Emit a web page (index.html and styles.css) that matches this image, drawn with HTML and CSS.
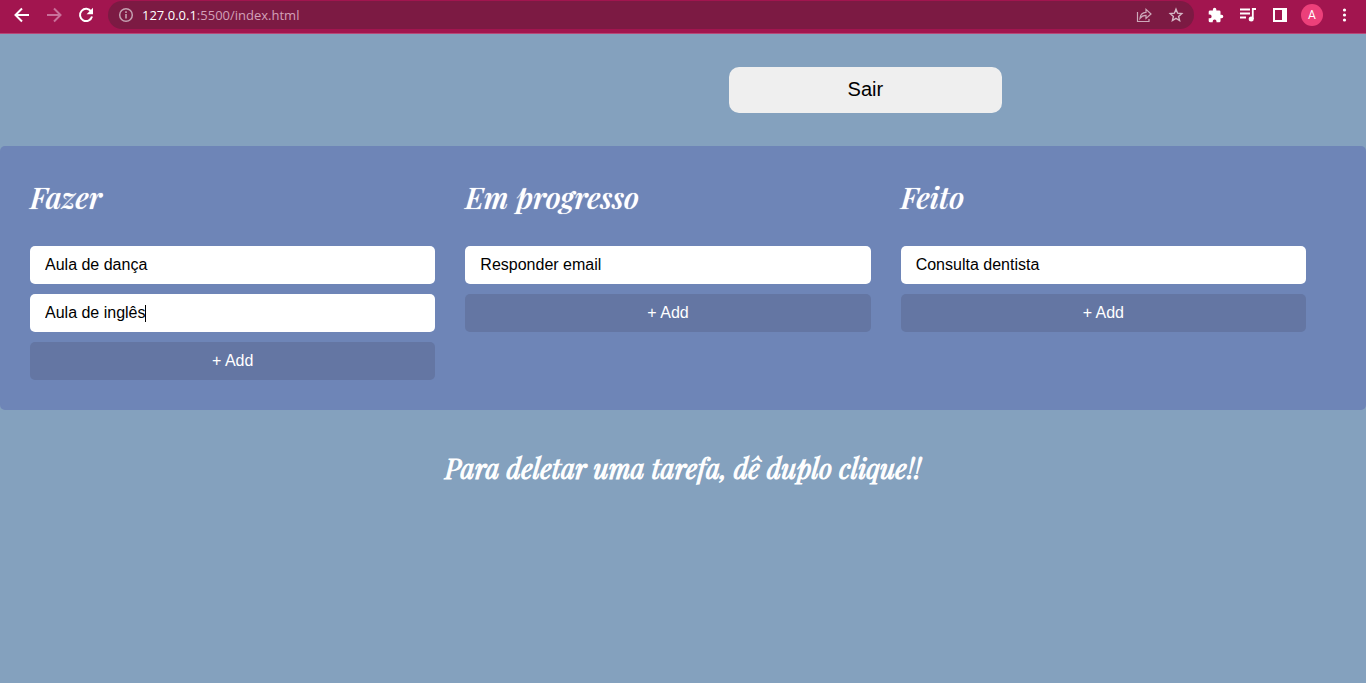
FILE: index.html
```html
<!DOCTYPE html>
<html lang="pt-BR">
<head>
<meta charset="utf-8">
<meta name="viewport" content="width=device-width, initial-scale=1">
<title>Tarefas</title>
<link rel="stylesheet" href="styles.css">
</head>
<body>
<header class="toolbar">
  <nav class="nav" aria-label="Navegação">
    <button class="icon-btn" type="button" aria-label="Voltar"><svg viewBox="0 0 16 16"><path d="M15 8H2M8 1.500 1.500 8 8 14.500" fill="none" stroke="#fff" stroke-width="2"/></svg></button>
    <button class="icon-btn" type="button" aria-label="Avançar"><svg viewBox="0 0 16 16"><path d="M1 8h13M8 1.500 14.500 8 8 14.500" fill="none" stroke="#c9709a" stroke-width="2"/></svg></button>
    <button class="icon-btn" type="button" aria-label="Recarregar"><svg viewBox="0 0 16 16"><path d="M13.200 4.600A6.100 6.100 0 1 0 14 9.500" fill="none" stroke="#fff" stroke-width="2"/><path d="M15 .8v6.400H8.600z" fill="#fff"/></svg></button>
  </nav>
  <div class="address">
    <svg class="address-info" viewBox="0 0 16 16" aria-hidden="true"><circle cx="8" cy="8" r="6.300" fill="none" stroke="#c3a0b0" stroke-width="1.500"/><path d="M8 7v4.500M8 4.300v1.600" stroke="#c3a0b0" stroke-width="1.600"/></svg>
    <div class="url" role="textbox" contenteditable="true" spellcheck="false" aria-label="Endereço"><span class="url-host">127.0.0.1</span>:5500/index.html</div>
    <button class="icon-btn" type="button" aria-label="Compartilhar"><svg viewBox="0 0 16 16"><path d="M1.500 5v9.500h11.500V12M4 11.300c.4-4 2.500-5.700 6-5.900V2.300L15 7l-5 4.500V8.400c-2.700 0-4.500.8-6 2.900z" fill="none" stroke="#cda9ba" stroke-width="1.200"/></svg></button>
    <button class="icon-btn" type="button" aria-label="Favoritar"><svg viewBox="0 0 16 16"><path d="m8 2.200 1.600 4 4.200.4-3.200 2.800 1 4.100L8 11.300l-3.600 2.200 1-4.100-3.200-2.800 4.200-.4z" fill="none" stroke="#d5b8c6" stroke-width="1.400"/></svg></button>
  </div>
  <div class="actions">
    <button class="icon-btn" type="button" aria-label="Extensões"><svg viewBox="1 0 23 23"><path fill="#fff" d="M20.500 11H19V7a2 2 0 0 0-2-2h-4V3.500a2.500 2.500 0 0 0-5 0V5H4a2 2 0 0 0-2 2v3.800h1.500a2.700 2.700 0 0 1 0 5.400H2V20a2 2 0 0 0 2 2h3.800v-1.500a2.700 2.700 0 0 1 5.400 0V22H17a2 2 0 0 0 2-2v-4h1.500a2.500 2.500 0 0 0 0-5z"/></svg></button>
    <button class="icon-btn" type="button" aria-label="Mídia"><svg viewBox="0 0 16 16"><path d="M0 2.500h10M0 6.500h10M0 10.500h6M12.800 12V2H16" fill="none" stroke="#fff" stroke-width="1.800"/><circle cx="11.200" cy="12" r="2.500" fill="#fff"/></svg></button>
    <button class="icon-btn" type="button" aria-label="Painel lateral"><svg viewBox="0 0 16 16"><path d="M1 1h14v14H1zM3 3v10h7V3z" fill="#fff" fill-rule="evenodd"/></svg></button>
    <button class="avatar" type="button" aria-label="Perfil A">A</button>
    <button class="icon-btn" type="button" aria-label="Menu"><svg viewBox="0 0 16 16"><g fill="#fff"><circle cx="8.500" cy="3" r="1.600"/><circle cx="8.500" cy="8" r="1.600"/><circle cx="8.500" cy="13" r="1.600"/></g></svg></button>
  </div>
</header>
<main>
  <button class="logout" type="button">Sair</button>
  <div class="board">
    <section class="column">
      <h2 class="column-title">Fazer</h2>
      <div class="task"><input class="task-input" type="text" aria-label="Tarefa 1 de Fazer" value="Aula de dança"></div>
      <div class="task task--editing"><input class="task-input" type="text" aria-label="Tarefa 2 de Fazer" value="Aula de inglês"></div>
      <button class="add" type="button">+ Add</button>
    </section>
    <section class="column">
      <h2 class="column-title">Em progresso</h2>
      <div class="task"><input class="task-input" type="text" aria-label="Tarefa 1 de Em progresso" value="Responder email"></div>
      <button class="add" type="button">+ Add</button>
    </section>
    <section class="column">
      <h2 class="column-title">Feito</h2>
      <div class="task"><input class="task-input" type="text" aria-label="Tarefa 1 de Feito" value="Consulta dentista"></div>
      <button class="add" type="button">+ Add</button>
    </section>
  </div>
  <p class="hint">Para deletar uma tarefa, dê duplo clique!!</p>
</main>
</body>
</html>
```
FILE: styles.css
```css
* { box-sizing: border-box; }
body {
  margin: 0;
  min-height: 100vh;
  background: #84a1be;
  font-family: "Liberation Sans", Arial, sans-serif;
  font-size: 16px;
}
button, input { font: inherit; border: 0; margin: 0; padding: 0; }
button { cursor: pointer; }

.toolbar {
  display: flex;
  align-items: center;
  gap: 14px;
  padding: 0 14px 3px;
  height: 34px;
  background: #a2154f;
  border-bottom: 1px solid #b74878;
}
.nav, .actions { display: flex; align-items: center; gap: 16px; }
.icon-btn { display: block; width: 16px; height: 16px; background: none; }
.icon-btn svg { display: block; width: 16px; height: 16px; }
.address {
  flex: 1;
  display: flex;
  align-items: center;
  gap: 16px;
  height: 28px;
  padding: 0 10px;
  border-radius: 14px;
  background: #7c1a43;
}
.address-info { width: 16px; height: 16px; }
.url {
  flex: 1;
  margin-left: -8px;
  font-family: "Open Sans", sans-serif;
  font-size: 13px;
  line-height: 20px;
  color: #d3a0b8;
  outline: 0;
}
.url-host { color: #fff; }
.avatar {
  width: 22px;
  height: 22px;
  margin: 0 -3px;
  border-radius: 50%;
  background: #ec407a;
  color: #fff;
  font-family: Roboto, sans-serif;
  font-size: 12px;
}

.logout {
  display: block;
  width: 20%;
  height: 46px;
  margin: 33px 0 33px 53.35%;
  padding-bottom: 2px;
  border-radius: 10px;
  background: #efefef;
  color: #000;
  font-size: 20px;
}
.board {
  display: grid;
  grid-template-columns: repeat(3, 1fr);
  align-items: start;
  gap: 30px;
  padding: 30px 60px 30px 30px;
  border-radius: 5px;
  background: #6e85b7;
}
.column { display: flex; flex-direction: column; gap: 10px; }
.column-title, .hint {
  font-family: "Playfair Display", "Liberation Serif", serif;
  font-style: italic;
  color: #fff;
}
.column-title {
  margin: 0 0 18px;
  font-size: 30px;
  font-weight: 500;
  line-height: 42px;
  text-shadow: 0 0 1px #fff;
}
.task {
  display: flex;
  align-items: center;
  height: 38px;
  padding: 0 15px;
  border-radius: 5px;
  background: #fff;
}
.task-input { width: 100%; background: none; color: #000; outline: 0; }
.task--editing .task-input { width: auto; field-sizing: content; }
.task--editing::after { content: ""; width: 1px; height: 17px; margin-left: -1px; background: #000; }
.add { height: 38px; border-radius: 5px; background: #6476a3; color: #fff; }
.hint {
  margin: 38px 0 0;
  font-size: 27px;
  font-weight: 400;
  line-height: 40px;
  text-align: center;
  -webkit-text-stroke: 1px #fff;
}
```
